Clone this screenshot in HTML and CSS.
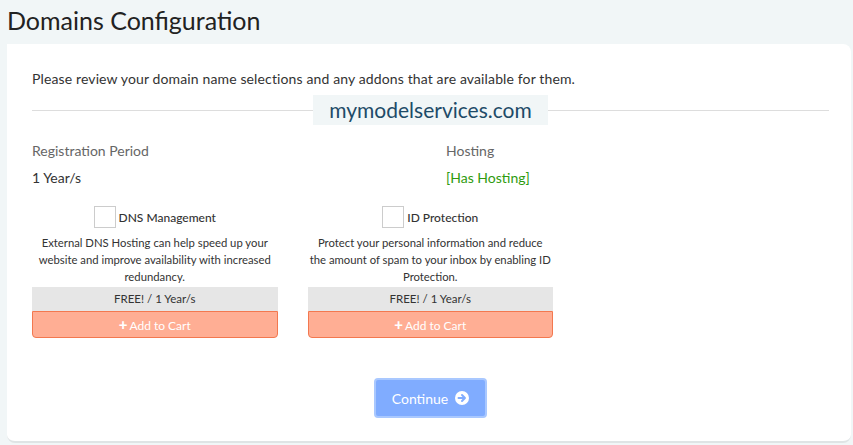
FILE: index.html
```html
<!DOCTYPE html>
<html>
<head>
<meta charset="utf-8">
<link rel="stylesheet" href="styles.css">
</head>
<body>
<div class="page">
  <h1 class="title">Domains Configuration</h1>
  <div class="card">
    <p class="intro">Please review your domain name selections and any addons that are available for them.</p>
    <div class="domain-sep">
      <span class="domain-name">mymodelservices.com</span>
    </div>
    <div class="info-row">
      <div class="info-col">
        <div class="info-label">Registration Period</div>
        <div class="info-value">1 Year/s</div>
      </div>
      <div class="info-col">
        <div class="info-label">Hosting</div>
        <div class="info-value green">[Has Hosting]</div>
      </div>
    </div>
    <div class="addons">
      <div class="addon">
        <div class="addon-head"><span class="check"></span><span class="addon-name">DNS Management</span></div>
        <p class="addon-desc">External DNS Hosting can help speed up your website and improve availability with increased redundancy.</p>
        <div class="price">FREE! / 1 Year/s</div>
        <div class="add-btn"><span class="plus">+</span>Add to Cart</div>
      </div>
      <div class="addon">
        <div class="addon-head"><span class="check"></span><span class="addon-name">ID Protection</span></div>
        <p class="addon-desc">Protect your personal information and reduce<br>the amount of spam to your inbox by enabling ID Protection.</p>
        <div class="price">FREE! / 1 Year/s</div>
        <div class="add-btn"><span class="plus">+</span>Add to Cart</div>
      </div>
      <div class="addon-empty"></div>
    </div>
    <div class="actions">
      <div class="continue">Continue
        <svg class="arrow" width="14" height="14" viewBox="0 0 16 16"><circle cx="8" cy="8" r="8" fill="#fff"/><path d="M4 8h7M8 4.6L11.4 8 8 11.4" stroke="#80acff" stroke-width="2.2" fill="none" stroke-linecap="round" stroke-linejoin="round"/></svg>
      </div>
    </div>
  </div>
</div>
</body>
</html>
```
FILE: styles.css
```css
* { box-sizing: border-box; }
html, body { margin: 0; padding: 0; }
body {
  background: #f1f6f7;
  font-family: "Lato", "Open Sans", sans-serif;
  color: #333;
  width: 853px;
  height: 445px;
  overflow: hidden;
}
.page { padding: 0 2px 0 7px; }
.title {
  margin: 0;
  padding-top: 4px;
  height: 44px;
  font-size: 25px;
  font-weight: 400;
  color: #222;
  line-height: 32px;
}
.card {
  background: #fff;
  border-radius: 0 8px 8px 8px;
  border-bottom: 2px solid #dfe4e5;
  padding: 25px 22px 24px 25px;
  height: 399px;
}
.intro {
  margin: 0;
  font-size: 14px;
  line-height: 20px;
  color: #333;
  letter-spacing: 0.13px;
}
.domain-sep {
  position: relative;
  margin-top: 6px;
  height: 30px;
  display: flex;
  justify-content: center;
  align-items: center;
}
.domain-sep::before {
  content: "";
  position: absolute;
  left: 0; right: 0; top: 15px;
  border-top: 1px solid #ddd;
}
.domain-name {
  position: relative;
  background: #f1f6f7;
  color: #1e4b68;
  font-size: 21px;
  line-height: 30px;
  padding: 0 16px;
}
.info-row {
  display: flex;
  margin-top: 16px;
}
.info-col { flex: 0 0 414px; }
.info-label { font-size: 14px; color: #666; line-height: 20px; }
.info-value { font-size: 14px; color: #333; line-height: 20px; margin-top: 7px; }
.green { color: #2f9b0e; }
.addons {
  display: flex;
  gap: 30px;
  margin-top: 18px;
}
.addon, .addon-empty { flex: 0 0 245.5px; text-align: center; }
.addon-head {
  display: flex;
  justify-content: center;
  align-items: center;
  gap: 3px;
  height: 22px;
}
.check {
  width: 22px; height: 22px;
  border: 1px solid #ccc;
  background: #fff;
  display: inline-block;
}
.addon-name { font-size: 12px; color: #333; font-weight: 500; }
.addon-desc {
  margin: 6px 0 0;
  font-size: 11.3px;
  line-height: 17px;
  color: #333;
  padding: 0;
  height: 53px;
}
.price {
  background: #e6e6e6;
  font-size: 11.5px;
  line-height: 24px;
  height: 24px;
  color: #333;
}
.add-btn {
  background: #ffae94;
  border: 1px solid #f3784f;
  border-radius: 0 0 4px 4px;
  color: #fff;
  font-size: 12px;
  height: 27px;
  line-height: 24px;
}
.plus { font-weight: 900; font-size: 15px; margin-right: 2px; }
.actions {
  display: flex;
  justify-content: center;
  margin-top: 40px;
}
.continue {
  display: flex;
  align-items: center;
  gap: 7px;
  width: 113px;
  height: 40px;
  justify-content: center;
  background: #80acff;
  border: 2px solid #a9c8ff;
  border-radius: 4px;
  color: #fff;
  font-size: 14px;
}
```
